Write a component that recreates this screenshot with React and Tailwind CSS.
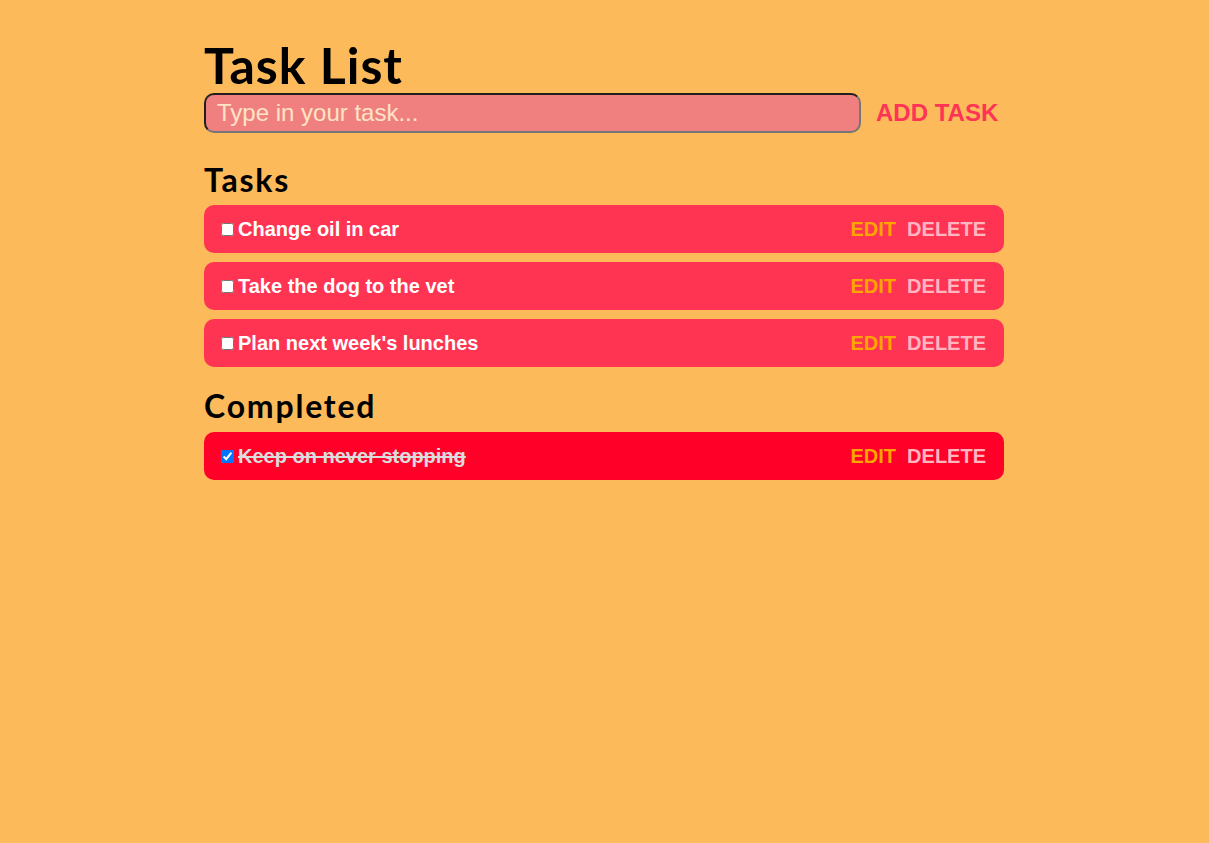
import React, { useState } from 'react';

const initialTasks = [
  { id: 1, text: 'Change oil in car', done: false },
  { id: 2, text: 'Take the dog to the vet', done: false },
  { id: 3, text: "Plan next week's lunches", done: false },
  { id: 4, text: 'Keep on never stopping', done: true },
];

function TaskRow({ task, onToggle }) {
  return (
    <li
      className={`flex items-center h-[48px] rounded-[10px] pl-[17px] pr-[18px] ${
        task.done ? 'bg-[#ff0029]' : 'bg-[#ff3453]'
      }`}
    >
      <input
        type="checkbox"
        checked={task.done}
        onChange={() => onToggle(task.id)}
        className="m-0 w-[13px] h-[13px]"
      />
      <span
        className={`ml-[4px] text-[20px] font-bold ${
          task.done ? 'line-through text-[#dcdcdc]' : 'text-white'
        }`}
      >
        {task.text}
      </span>
      <div className="ml-auto flex gap-[11px] text-[20px] font-bold">
        <button className="text-[#ffa500]">EDIT</button>
        <button className="text-[#ffb6c1]">DELETE</button>
      </div>
    </li>
  );
}

export default function App() {
  const [tasks, setTasks] = useState(initialTasks);
  const [draft, setDraft] = useState('');

  const toggle = (id) =>
    setTasks((prev) => prev.map((t) => (t.id === id ? { ...t, done: !t.done } : t)));

  const todo = tasks.filter((t) => !t.done);
  const done = tasks.filter((t) => t.done);

  return (
    <div className="min-h-screen bg-[#fcba5a] font-['Liberation_Sans',Arial,sans-serif]">
      <div className="w-[800px] ml-[204px] pt-[40px]">
        <h1 className="font-['Lato',sans-serif] font-bold text-[50px] leading-[50px] tracking-[1px] text-black">
          Task List
        </h1>

        <form className="flex items-center mt-[3px]" onSubmit={(e) => e.preventDefault()}>
          <input
            value={draft}
            onChange={(e) => setDraft(e.target.value)}
            placeholder="Type in your task..."
            className="w-[657px] h-[40px] rounded-[10px] border-2 border-t-[#1f1f1f] border-l-[#1f1f1f] border-b-[#767676] border-r-[#767676] bg-[#f08080] pl-[11px] text-[24px] text-white placeholder:text-[#ffe4c4] outline-none"
          />
          <button className="ml-[15px] text-[24px] font-bold text-[#ff3355]">ADD TASK</button>
        </form>

        <h2 className="mt-[27px] font-['Lato',sans-serif] font-bold text-[32px] leading-[40px] tracking-[1.8px] text-black">
          Tasks
        </h2>
        <ul className="mt-[5px] flex flex-col gap-[9px]">
          {todo.map((t) => (
            <TaskRow key={t.id} task={t} onToggle={toggle} />
          ))}
        </ul>

        <h2 className="mt-[19px] font-['Lato',sans-serif] font-bold text-[32px] leading-[40px] tracking-[1.8px] text-black">
          Completed
        </h2>
        <ul className="mt-[6px] flex flex-col gap-[9px]">
          {done.map((t) => (
            <TaskRow key={t.id} task={t} onToggle={toggle} />
          ))}
        </ul>
      </div>
    </div>
  );
}
